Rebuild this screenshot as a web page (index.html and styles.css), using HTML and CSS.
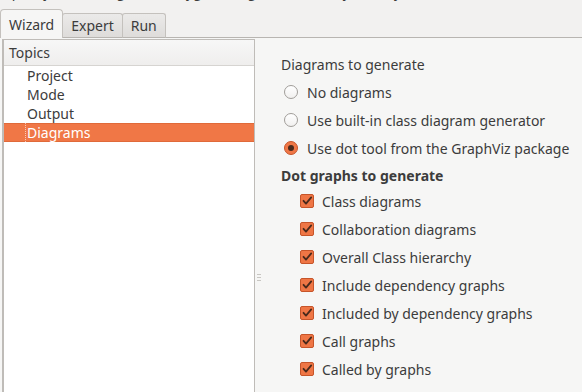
FILE: index.html
```html
<!DOCTYPE html>
<html>
<head>
<meta charset="utf-8">
<link rel="stylesheet" href="styles.css">
</head>
<body>
<div class="window">
  <div class="intro"><span>Specify which diagrams doxygen will generate, if any, and by which tool,</span></div>
  <div class="tabbar">
    <div class="tab active">Wizard</div>
    <div class="tab">Expert</div>
    <div class="tab">Run</div>
    <div class="tabfill"></div>
  </div>
  <div class="content">
    <div class="topics">
      <div class="topics-header">Topics</div>
      <ul class="topic-list">
        <li class="topic">Project</li>
        <li class="topic">Mode</li>
        <li class="topic">Output</li>
        <li class="topic selected"><span class="focus">Diagrams</span></li>
      </ul>
    </div>
    <div class="splitter"><span class="grip"></span><span class="grip"></span><span class="grip"></span></div>
    <div class="page">
      <div class="section-title">Diagrams to generate</div>
      <div class="radios">
        <div class="radio-row"><span class="radio"></span><span>No diagrams</span></div>
        <div class="radio-row"><span class="radio"></span><span>Use built-in class diagram generator</span></div>
        <div class="radio-row"><span class="radio on"></span><span>Use dot tool from the GraphViz package</span></div>
      </div>
      <div class="section-bold">Dot graphs to generate</div>
      <div class="checks">
        <div class="check-row"><span class="check"><svg viewBox="0 0 14 14" width="14" height="14"><path d="M3.5 6.8 L6 9.6 L11.2 3.4" fill="none" stroke="#4a2a1c" stroke-width="1.8" stroke-linecap="round" stroke-linejoin="round"/></svg></span><span>Class diagrams</span></div>
        <div class="check-row"><span class="check"><svg viewBox="0 0 14 14" width="14" height="14"><path d="M3.5 6.8 L6 9.6 L11.2 3.4" fill="none" stroke="#4a2a1c" stroke-width="1.8" stroke-linecap="round" stroke-linejoin="round"/></svg></span><span>Collaboration diagrams</span></div>
        <div class="check-row"><span class="check"><svg viewBox="0 0 14 14" width="14" height="14"><path d="M3.5 6.8 L6 9.6 L11.2 3.4" fill="none" stroke="#4a2a1c" stroke-width="1.8" stroke-linecap="round" stroke-linejoin="round"/></svg></span><span>Overall Class hierarchy</span></div>
        <div class="check-row"><span class="check"><svg viewBox="0 0 14 14" width="14" height="14"><path d="M3.5 6.8 L6 9.6 L11.2 3.4" fill="none" stroke="#4a2a1c" stroke-width="1.8" stroke-linecap="round" stroke-linejoin="round"/></svg></span><span>Include dependency graphs</span></div>
        <div class="check-row"><span class="check"><svg viewBox="0 0 14 14" width="14" height="14"><path d="M3.5 6.8 L6 9.6 L11.2 3.4" fill="none" stroke="#4a2a1c" stroke-width="1.8" stroke-linecap="round" stroke-linejoin="round"/></svg></span><span>Included by dependency graphs</span></div>
        <div class="check-row"><span class="check"><svg viewBox="0 0 14 14" width="14" height="14"><path d="M3.5 6.8 L6 9.6 L11.2 3.4" fill="none" stroke="#4a2a1c" stroke-width="1.8" stroke-linecap="round" stroke-linejoin="round"/></svg></span><span>Call graphs</span></div>
        <div class="check-row"><span class="check"><svg viewBox="0 0 14 14" width="14" height="14"><path d="M3.5 6.8 L6 9.6 L11.2 3.4" fill="none" stroke="#4a2a1c" stroke-width="1.8" stroke-linecap="round" stroke-linejoin="round"/></svg></span><span>Called by graphs</span></div>
      </div>
    </div>
  </div>
</div>
</body>
</html>
```

FILE: styles.css
```css
html, body {
  margin: 0;
  padding: 0;
  background: #f2f1f0;
}
.window {
  width: 582px;
  height: 392px;
  overflow: hidden;
  font-family: "Noto Sans", "Open Sans", sans-serif;
  font-size: 14px;
  color: #3c3c3c;
  display: flex;
  flex-direction: column;
}
.intro {
  height: 9px;
  overflow: hidden;
}
.intro span {
  display: block;
  margin-top: -17px;
  padding-left: 4px;
  white-space: nowrap;
  line-height: 18px;
}
.tabbar {
  display: flex;
  align-items: flex-end;
  height: 29px;
}
.tab {
  height: 25px;
  box-sizing: border-box;
  padding: 0 8px;
  line-height: 24px;
  border: 1px solid #c4c1bd;
  border-bottom: 1px solid #b8b5b1;
  border-radius: 3px 3px 0 0;
  background: linear-gradient(#ebeae9, #dedcda);
  margin-left: -1px;
}
.tab.active {
  height: 29px;
  line-height: 29px;
  margin-left: 0;
  background: #f6f6f5;
  border-radius: 4px 4px 0 0;
  padding: 0 8px;
  z-index: 1;
  border-color: #c4c1bd;
  border-bottom: none;
}
.tabfill {
  flex: 1;
  border-bottom: 1px solid #b8b5b1;
  height: 0;
}
.content {
  flex: 1;
  display: flex;
  background: #f6f6f5;
  padding-top: 1px;
  min-height: 0;
}
.topics {
  margin-left: 2px;
  width: 253px;
  box-sizing: border-box;
  border: 1px solid #bfbcb8;
  border-left-width: 2px;
  border-bottom: none;
  background: #ffffff;
  display: flex;
  flex-direction: column;
}
.topics-header {
  height: 25px;
  line-height: 26px;
  padding-left: 5px;
  background: linear-gradient(#f7f7f7, #efeeed);
  border-bottom: 1px solid #d6d4d1;
}
.topic-list {
  list-style: none;
  margin: 0;
  padding: 0;
}
.topic {
  height: 19px;
  line-height: 19px;
  padding-left: 23px;
}
.topic.selected {
  background: #f07746;
  color: #ffffff;
  border-top: 1px solid #e06a3a;
  border-bottom: 1px solid #e06a3a;
  height: 17px;
  line-height: 18px;
}
.topic .focus {
  border-left: 1px dotted rgba(255,255,255,0.6);
  padding-left: 1px;
  margin-left: -2px;
}
.splitter {
  width: 3px;
  display: flex;
  flex-direction: column;
  align-items: center;
  gap: 2px;
  padding-top: 235px;
  padding-left: 1px;
}
.grip {
  width: 4px;
  height: 1px;
  background: #c8c6c2;
  margin-left: 2px;
}
.page {
  flex: 1;
  padding: 17px 0 0 22px;
}
.section-title {
  height: 18px;
  line-height: 18px;
}
.radios {
  padding-top: 4px;
}
.radio-row {
  display: flex;
  align-items: center;
  height: 28px;
  gap: 9px;
  padding-left: 3px;
}
.radio {
  width: 12px;
  height: 12px;
  border-radius: 50%;
  border: 1px solid #a09d99;
  background: linear-gradient(#ffffff, #f1f0ef);
  box-sizing: content-box;
  flex: none;
  position: relative;
}
.radio.on {
  border-color: #c6552a;
  background: #f07746;
}
.radio.on::after {
  content: "";
  position: absolute;
  left: 3px;
  top: 3px;
  width: 6px;
  height: 6px;
  border-radius: 50%;
  background: #4a2a1c;
}
.section-bold {
  font-weight: bold;
  height: 25px;
  line-height: 27px;
}
.checks {
  padding-left: 19px;
}
.check-row {
  display: flex;
  align-items: center;
  height: 28px;
  gap: 8px;
}
.check {
  width: 14px;
  height: 14px;
  box-sizing: border-box;
  border: 1px solid #c6552a;
  border-radius: 2px;
  background: #ef7645;
  flex: none;
  display: flex;
  align-items: center;
  justify-content: center;
}
.check svg {
  display: block;
  flex: none;
}
```
